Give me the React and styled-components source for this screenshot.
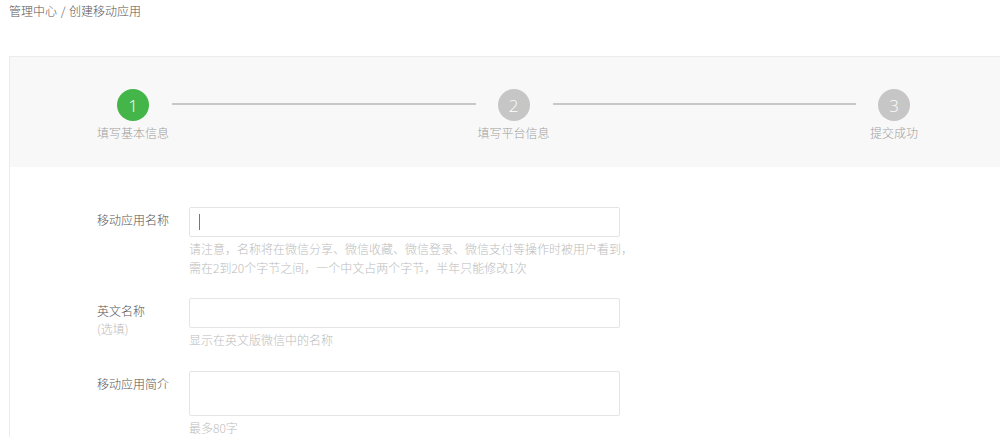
import React from "react";
import styled, { createGlobalStyle } from "styled-components";

const Global = createGlobalStyle`
  html, body { margin: 0; padding: 0; background: #fff; }
  body {
    font-family: "Noto Sans CJK SC", "Noto Sans", "Liberation Sans", sans-serif;
    font-size: 12px;
    font-weight: 300;
    color: #333;
  }
`;

const Page = styled.div`
  width: 1000px;
  height: 444px;
  overflow: hidden;
`;

const Breadcrumb = styled.div`
  padding: 2px 9px 0;
  line-height: 18px;
  font-size: 12px;
  color: #555;
  word-spacing: 1px;
`;

const Panel = styled.div`
  margin: 36px 0 0 9px;
  border-top: 1px solid #ececec;
  border-left: 1px solid #ececec;
`;

const StepsBand = styled.div`
  background: #f8f8f8;
  height: 110px;
  box-sizing: border-box;
  padding: 32px 70px 0 87px;
  display: flex;
  align-items: flex-start;
`;

const Step = styled.div`
  width: 72px;
  display: flex;
  flex-direction: column;
  align-items: center;
  flex: none;
`;

const Circle = styled.div`
  width: 32px;
  height: 32px;
  border-radius: 50%;
  background: ${(p) => (p.$active ? "#44b549" : "#c6c6c6")};
  color: #fff;
  font-family: "Open Sans", "Noto Sans", sans-serif;
  font-weight: 300;
  font-size: 17px;
  display: flex;
  align-items: center;
  justify-content: center;
`;

const StepLabel = styled.div`
  margin-top: 3px;
  line-height: 18px;
  font-size: 12px;
  color: #9d9d9d;
  white-space: nowrap;
`;

const Connector = styled.div`
  flex: 1;
  height: 2px;
  margin: 14px 2px 0 3px;
  background: #c8c8c8;
`;

const Form = styled.div`
  padding: 40px 0 0 87px;
`;

const Row = styled.div`
  display: flex;
  margin-bottom: ${(p) => p.$gap ?? 21}px;
`;

const Label = styled.div`
  width: 92px;
  flex: none;
  padding-top: 4px;
  line-height: 18px;
  font-size: 12px;
  color: #555;
`;

const SubLabel = styled.div`
  color: #bbb;
`;

const Field = styled.div`
  width: 431px;
`;

const Box = styled.div`
  box-sizing: border-box;
  width: 431px;
  height: ${(p) => p.$h}px;
  border: 1px solid #e4e4e4;
  border-radius: 2px;
  background: #fff;
  padding: 6px 9px;
  display: flex;
  align-items: flex-start;
`;

const Caret = styled.span`
  display: inline-block;
  width: 1px;
  height: 16px;
  background: #777;
`;

const Hint = styled.div`
  margin-top: 2px;
  line-height: 19px;
  font-size: 12px;
  color: #bcbcbc;
  white-space: nowrap;
`;

const steps = ["填写基本信息", "填写平台信息", "提交成功"];

export default function App() {
  return (
    <Page>
      <Global />
      <Breadcrumb>管理中心 / 创建移动应用</Breadcrumb>
      <Panel>
        <StepsBand>
          {steps.map((s, i) => (
            <React.Fragment key={s}>
              {i > 0 && <Connector />}
              <Step>
                <Circle $active={i === 0}>{i + 1}</Circle>
                <StepLabel>{s}</StepLabel>
              </Step>
            </React.Fragment>
          ))}
        </StepsBand>
        <Form>
          <Row>
            <Label>移动应用名称</Label>
            <Field>
              <Box $h={30}>
                <Caret />
              </Box>
              <Hint>
                <div>请注意，名称将在微信分享、微信收藏、微信登录、微信支付等操作时被用户看到，</div>
                <div>需在2到20个字节之间，一个中文占两个字节，半年只能修改1次</div>
              </Hint>
            </Field>
          </Row>
          <Row $gap={22}>
            <Label>
              英文名称
              <SubLabel>(选填)</SubLabel>
            </Label>
            <Field>
              <Box $h={30} />
              <Hint>显示在英文版微信中的名称</Hint>
            </Field>
          </Row>
          <Row>
            <Label>移动应用简介</Label>
            <Field>
              <Box $h={45} />
              <Hint>最多80字</Hint>
            </Field>
          </Row>
        </Form>
      </Panel>
    </Page>
  );
}
